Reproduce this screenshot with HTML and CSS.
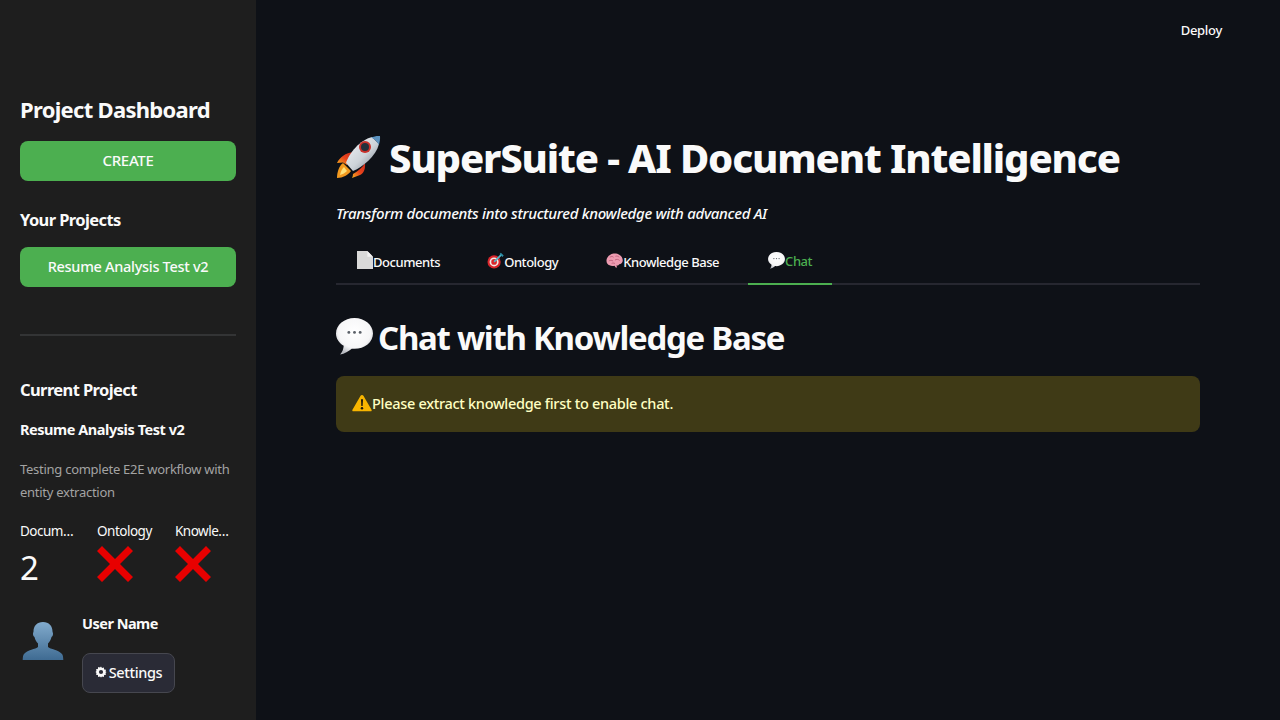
FILE: index.html
```html
<!DOCTYPE html>
<html>
  <head>
  <meta charset="utf-8">
  <title>SuperSuite</title>
  <link rel="stylesheet" href="styles.css">
  </head>
  <body>
  <svg class="defs" width="0" height="0">
    <defs>
      <radialGradient id="bubbleFill" cx=".5" cy=".38" r=".62">
        <stop offset="0" stop-color="#ffffff"/>
        <stop offset=".7" stop-color="#f6f6f7"/>
        <stop offset="1" stop-color="#b9bcc2"/>
      </radialGradient>
      <symbol id="bubble" viewBox="0 0 36 36">
        <path d="M18 0C8.100 0 0 6.700 0 15c0 5 3 9.300 7.500 11.900C7.300 30 6.200 33 4 35.500c4.200-.6 8.600-3.300 11.300-5.700 .9 .1 1.800 .2 2.700 .2 9.900 0 18-6.700 18-15S27.900 0 18 0z" fill="url(#bubbleFill)"/>
        <circle cx="12.500" cy="14" r="1.400" fill="#5b6068"/>
        <circle cx="18" cy="14" r="1.400" fill="#5b6068"/>
        <circle cx="23.500" cy="14" r="1.400" fill="#5b6068"/>
      </symbol>
      <symbol id="cross" viewBox="0 0 36 36">
        <path d="M5 0L18 13 31 0l5 5-13 13 13 13-5 5-13-13L5 36l-5-5 13-13L0 5z" fill="#e80000"/>
      </symbol>
    </defs>
  </svg>

  <div class="app">
    <aside class="sidebar">
      <h2 class="side-title">Project Dashboard</h2>
      <div class="green-btn create-btn">CREATE</div>
      <h3 class="side-head">Your Projects</h3>
      <div class="green-btn project-btn">Resume Analysis Test v2</div>
      <hr class="side-rule">
      <h3 class="side-head current-head">Current Project</h3>
      <div class="project-name">Resume Analysis Test v2</div>
      <p class="project-desc">Testing complete E2E workflow with entity extraction</p>

      <div class="metrics">
        <div class="metric">
          <div class="metric-label">Docum…</div>
          <div class="metric-value">2</div>
        </div>
        <div class="metric">
          <div class="metric-label">Ontology</div>
          <svg class="cross" width="36" height="36"><use href="#cross"/></svg>
        </div>
        <div class="metric">
          <div class="metric-label">Knowle…</div>
          <svg class="cross" width="36" height="36"><use href="#cross"/></svg>
        </div>
      </div>

      <div class="user-row">
        <svg class="avatar" width="46" height="46" viewBox="0 0 46 46">
          <defs>
            <linearGradient id="bust" x1="0" y1="0" x2="0" y2="1">
              <stop offset="0" stop-color="#82abcd"/>
              <stop offset="1" stop-color="#3f6b92"/>
            </linearGradient>
          </defs>
          <path d="M23 2c-6 0-9.500 4-9.500 9.500 0 1-.5 1-.5 2.500 0 1.500 .8 2.500 1.500 3 .6 3 2 5 3.500 6.500v3.500c-2 2-11 3-14 7-.9 1.200-1.200 3-1.300 6h40.600c-.1-3-.4-4.800-1.300-6-3-4-12-5-14-7V23.500c1.500-1.500 2.900-3.500 3.500-6.500 .7-.5 1.500-1.500 1.500-3 0-1.500-.5-1.500-.5-2.500C32.500 6 29 2 23 2z" fill="url(#bust)"/>
        </svg>
        <div class="user-info">
          <div class="user-name">User Name</div>
          <div class="settings-btn">
            <svg width="12" height="12" viewBox="0 0 24 24"><path d="M12 1l2 3.200 3.600-1 .7 3.700 3.700.7-1 3.600L23 12l-2 1.800 1 3.600-3.700.7-.7 3.700-3.600-1L12 23l-2-2.200-3.600 1-.7-3.700L2 17.400l1-3.600L1 12l2-1.800-1-3.600 3.700-.7.7-3.700 3.600 1z" fill="#fafafa"/><circle cx="12" cy="12" r="4.200" fill="#2a2b36"/></svg>
            <span>Settings</span>
          </div>
        </div>
      </div>
    </aside>

    <main class="main">
      <header class="topbar"><span class="deploy">Deploy</span></header>
      <div class="content">
        <h1 class="page-title">
          <svg class="title-icon" width="46" height="46" viewBox="0 0 46 46">
            <defs>
              <linearGradient id="hull" x1="0" y1="0" x2="1" y2="1">
                <stop offset="0" stop-color="#f3f5f7"/>
                <stop offset=".55" stop-color="#cdd3d9"/>
                <stop offset="1" stop-color="#6f7a85"/>
              </linearGradient>
              <linearGradient id="fin" x1="0" y1="1" x2="1" y2="0">
                <stop offset="0" stop-color="#f7b21f"/>
                <stop offset=".5" stop-color="#e8431c"/>
                <stop offset="1" stop-color="#c92a1b"/>
              </linearGradient>
            </defs>
            <path d="M2 29c3-6 8-10 17-11l-7 13-4-2.500z" fill="url(#fin)"/>
            <path d="M17 44c1-2 .8-3 1-4 5-3 9-6 12-11 .5 6-1 10-5 12z" fill="url(#fin)"/>
            <path d="M2 44c0-6 2-12 6-15l8 8c-3 4-8 7-14 7z" fill="#f39a1f"/>
            <path d="M5 41c1-4 2-6 4-8l3 4c-2 2-4 3-7 4z" fill="#ffe27a"/>
            <path d="M11 29C14 19 25 6 37 3l7 7C41 22 28 33 18 37z" fill="url(#hull)"/>
            <path d="M36 3.500c3-1.200 6-1.800 9-1.500 .3 3-.2 6-1.200 9-1.500-3.500-4.300-6-7.800-7.500z" fill="#5c93c0"/>
            <circle cx="30" cy="13" r="6" fill="#c9302a"/>
            <circle cx="30" cy="13" r="4" fill="#25303b"/>
          </svg>
          <span>SuperSuite - AI Document Intelligence</span>
        </h1>
        <p class="tagline">Transform documents into structured knowledge with advanced AI</p>

        <nav class="tabs">
          <div class="tab tab-docs">
            <svg class="tab-icon" width="16" height="18" viewBox="0 0 17 19"><path d="M0 0h11l6 6v13H0z" fill="#d9d9d9"/><path d="M11 0l6 6h-6z" fill="#f2f2f2"/></svg>
            <span>Documents</span>
          </div>
          <div class="tab tab-onto">
            <svg class="tab-icon" width="17" height="17" viewBox="0 0 18 18">
              <circle cx="7.500" cy="10.500" r="7" fill="#d9252b"/>
              <circle cx="7.500" cy="10.500" r="4.800" fill="#f3e9e6"/>
              <circle cx="7.500" cy="10.500" r="3" fill="#d9252b"/>
              <path d="M7.500 10.500L15 3" stroke="#53b8c9" stroke-width="1.800"/>
              <path d="M14 1.500l3 3" stroke="#2c8ea6" stroke-width="2"/>
            </svg>
            <span>Ontology</span>
          </div>
          <div class="tab tab-know">
            <svg class="tab-icon" width="17" height="16" viewBox="0 0 18 16">
              <path d="M5 1c2-1.300 7-1.300 9 .3 2.500 1.200 4 4 3.700 6.700-.3 2-1.700 3.300-3.700 3.500-.5 1-1.500 1.500-3 1.300l.8 2.200h-1.500L9 13c-3 .5-6 0-7.500-2C-.3 8.500 0 3.500 5 1z" fill="#ed9bb0"/>
              <path d="M4 4c1.500-1 3-1 4 0M10 3c1.500-.5 3 0 4 1M3 8c1.500-1 3-1 4.500 0M9.500 7c1.500-1 3.500-1 5 .5M6 10.500c1-.5 2.500-.5 3.500 .3" stroke="#b95c77" stroke-width=".9" fill="none"/>
            </svg>
            <span>Knowledge Base</span>
          </div>
          <div class="tab tab-chat active">
            <svg class="tab-icon" width="17" height="17"><use href="#bubble"/></svg>
            <span>Chat</span>
          </div>
        </nav>

        <h2 class="section-title">
          <svg class="section-icon" width="37" height="37"><use href="#bubble"/></svg>
          <span>Chat with Knowledge Base</span>
        </h2>

        <div class="alert">
          <svg class="alert-icon" width="20" height="18" viewBox="0 0 21 18">
            <path d="M10.500 .5c.7 0 1.200 .4 1.500 1l8.500 14.500c.5 .9 0 1.700-1 1.700H1.500c-1 0-1.500-.8-1-1.700L9 1.500c.3-.6 .8-1 1.500-1z" fill="#f7b500"/>
            <path d="M9.400 5h2.200l-.4 7.200H9.800z" fill="#1e1a0c"/>
            <circle cx="10.500" cy="14.500" r="1.300" fill="#1e1a0c"/>
          </svg>
          <span>Please extract knowledge first to enable chat.</span>
        </div>
      </div>
    </main>
  </div>
  </body>
</html>
```

FILE: styles.css
```css
html, body {
  margin: 0;
  height: 100%;
  overflow: hidden;
}
body {
  font-family: "Noto Sans", "Open Sans", sans-serif;
  color: #fafafa;
  background: #0e1117;
}
h1, h2, h3, p {
  margin: 0;
}
.defs {
  position: absolute;
}
.app {
  display: flex;
  height: 720px;
}

/* sidebar */
.sidebar {
  width: 256px;
  box-sizing: border-box;
  padding: 93px 20px 0;
  background: #1e1e1e;
  flex: none;
}
.side-title {
  font-size: 22px;
  line-height: 32px;
  font-weight: 700;
  letter-spacing: -0.7px;
}
.green-btn {
  display: flex;
  align-items: center;
  justify-content: center;
  height: 40px;
  border-radius: 8px;
  background: #4caf50;
  font-size: 14.5px;
  font-weight: 500;
  letter-spacing: -0.3px;
  padding-bottom: 3px;
  box-sizing: border-box;
}
.create-btn {
  margin-top: 16px;
  font-size: 15px;
}
.side-head {
  font-size: 16.5px;
  line-height: 24px;
  font-weight: 700;
  letter-spacing: -0.6px;
  margin: 27px 0 15px;
}
.side-rule {
  border: none;
  height: 2px;
  background: #333435;
  margin: 47px 0 0;
}
.current-head {
  margin: 42px 0 0;
}
.project-name {
  font-size: 14.5px;
  line-height: 22px;
  font-weight: 700;
  letter-spacing: -0.45px;
  margin-top: 16px;
}
.project-desc {
  font-size: 13px;
  line-height: 23px;
  color: #a3a3a3;
  letter-spacing: -0.27px;
  margin-top: 18px;
}
.metrics {
  display: grid;
  grid-template-columns: 77px 78px 1fr;
  margin-top: 17px;
}
.metric-label {
  font-size: 13.5px;
  line-height: 20px;
  letter-spacing: -0.5px;
  white-space: nowrap;
}
.metric-value {
  font-size: 33px;
  line-height: 54px;
  font-weight: 400;
}
.cross {
  display: block;
  margin-top: 5px;
}
.user-row {
  display: flex;
  margin-top: 17px;
}
.avatar {
  margin-top: 8px;
  flex: none;
}
.user-info {
  margin-left: 16px;
}
.user-name {
  font-size: 14.5px;
  line-height: 22px;
  font-weight: 700;
  letter-spacing: -0.5px;
}
.settings-btn {
  display: flex;
  align-items: center;
  gap: 2px;
  box-sizing: border-box;
  width: 93px;
  height: 40px;
  justify-content: center;
  margin-top: 19px;
  padding-bottom: 2px;
  border: 1px solid #46474f;
  border-radius: 8px;
  background: #2a2b36;
  font-size: 14.5px;
  font-weight: 500;
  letter-spacing: -0.35px;
}

/* main area */
.main {
  flex: 1;
  min-width: 0;
}
.topbar {
  display: flex;
  justify-content: flex-end;
  padding: 20px 58px 0 0;
  height: 40px;
}
.deploy {
  font-size: 13px;
  line-height: 20px;
  font-weight: 500;
  letter-spacing: -0.3px;
}
.content {
  width: 864px;
  margin: 0 0 0 80px;
  padding-top: 71px;
}
.page-title {
  display: flex;
  align-items: center;
  gap: 8px;
  height: 52px;
  font-size: 40px;
  font-weight: 800;
  letter-spacing: -1.14px;
  white-space: nowrap;
}
.title-icon {
  flex: none;
  margin-left: -1px;
}
.tagline {
  margin-top: 19px;
  font-size: 15px;
  line-height: 22px;
  font-weight: 500;
  font-style: italic;
  letter-spacing: -0.31px;
}
.tabs {
  display: flex;
  margin-top: 14px;
  height: 45px;
  border-bottom: 2px solid #262730;
}
.tab {
  display: flex;
  align-items: center;
  height: 47px;
  box-sizing: border-box;
  font-size: 13px;
  font-weight: 500;
  letter-spacing: -0.45px;
}
.tab-icon {
  margin-bottom: 3px;
  flex: none;
}
.tab-docs {
  margin-left: 21px;
}
.tab-onto {
  margin-left: 47px;
}
.tab-know {
  margin-left: 48px;
}
.tab-know .tab-icon {
  margin-bottom: 1px;
}
.tab-chat {
  margin-left: 29px;
  width: 84px;
  padding-left: 20px;
}
.tab-chat .tab-icon {
  margin-bottom: 0;
}
.active {
  color: #4caf50;
  border-bottom: 2px solid #4caf50;
}
.section-title {
  display: flex;
  align-items: center;
  gap: 5px;
  margin-top: 30px;
  height: 44px;
  font-size: 33px;
  font-weight: 700;
  letter-spacing: -1.28px;
  white-space: nowrap;
}
.section-icon {
  flex: none;
  margin-bottom: 1px;
}
.alert {
  display: flex;
  align-items: center;
  height: 56px;
  box-sizing: border-box;
  margin-top: 17px;
  padding: 0 16px 2px;
  border-radius: 8px;
  background: #3f3a16;
  color: #ffffc2;
  font-size: 14.5px;
  font-weight: 500;
  letter-spacing: -0.3px;
}
.alert-icon {
  flex: none;
}
```
